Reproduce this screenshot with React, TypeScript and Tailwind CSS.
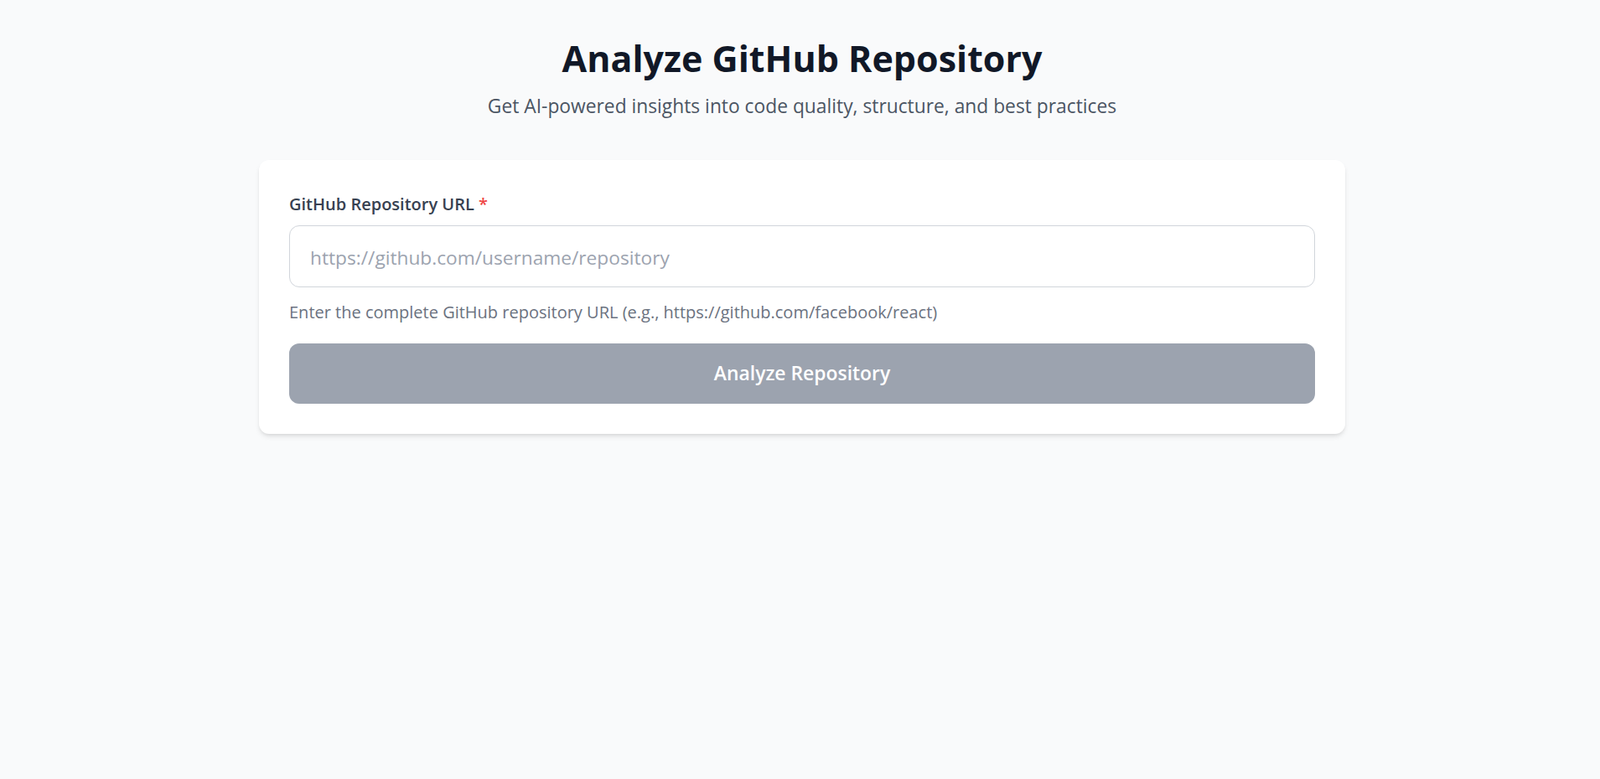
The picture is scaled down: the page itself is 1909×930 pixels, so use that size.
import { useState } from 'react';

export default function App() {
  const [url, setUrl] = useState('');
  const font = { fontFamily: '"Open Sans", "Noto Sans", sans-serif' };

  return (
    <div className="min-h-screen bg-[#f9fafb] pl-[5px]" style={font}>
      <div className="w-[1296px] mx-auto pt-[46px]">
        {/* Header */}
        <div className="text-center">
          <h1 className="text-[43px] leading-[48px] font-bold text-[#111827]">
            Analyze GitHub Repository
          </h1>
          <p className="mt-[18px] text-[22.8px] leading-[30px] text-[#4b5563]">
            Get AI-powered insights into code quality, structure, and best practices
          </p>
        </div>

        {/* Form card */}
        <div className="mt-[49px] bg-white rounded-[12px] shadow-md px-[36px] pt-[39px] pb-[36px]">
          <label className="block text-[20px] leading-[28px] font-semibold text-[#374151]">
            GitHub Repository URL <span className="text-[#ef4444]">*</span>
          </label>
          <input
            type="text"
            value={url}
            onChange={e => setUrl(e.target.value)}
            placeholder="https://github.com/username/repository"
            className="mt-[11px] block w-full h-[74px] px-[24px] pt-[3px] rounded-[12px] border border-[#d1d5db] bg-white text-[22.7px] text-[#111827] placeholder:text-[#9ca3af] outline-none"
          />
          <p className="mt-[16px] text-[20px] leading-[28px] text-[#6b7280]">
            Enter the complete GitHub repository URL (e.g., https://github.com/facebook/react)
          </p>
          <button
            disabled={!url}
            className="mt-[23px] w-full h-[72px] rounded-[12px] bg-[#9ca3af] text-white text-[22.9px] font-semibold"
          >
            Analyze Repository
          </button>
        </div>
      </div>
    </div>
  );
}
